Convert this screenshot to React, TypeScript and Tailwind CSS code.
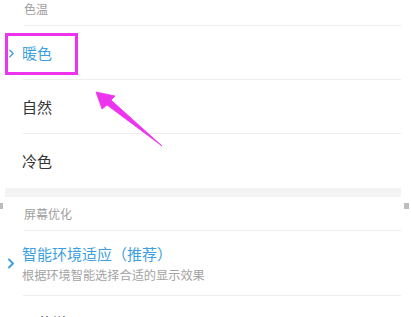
import React from "react";

const Chevron = ({ size = "sm" }: { size?: "sm" | "lg" }) => (
  <svg
    width={size === "sm" ? 7 : 8}
    height={size === "sm" ? 9 : 11}
    viewBox="0 0 8 11"
    className="shrink-0"
  >
    <polyline
      points="2,1.5 6,5.5 2,9.5"
      fill="none"
      stroke="#3d9fe0"
      strokeWidth={size === "sm" ? 1.7 : 1.9}
      strokeLinecap="round"
      strokeLinejoin="round"
    />
  </svg>
);

const SectionLabel = ({ text, h }: { text: string; h: string }) => (
  <div className="pl-[5px] pr-[10px]">
    <div className={`ml-[19px] ${h} flex items-center border-b border-[#eeeeee] text-[12px] text-[#a0a0a0]`}>
      {text}
    </div>
  </div>
);

const Option = ({
  title,
  sub,
  active,
  h,
  last,
}: {
  title: string;
  sub?: string;
  active?: boolean;
  h: string;
  last?: boolean;
}) => (
  <div className="flex pr-[10px]">
    <div className={`w-[23px] flex justify-start ${sub ? "pl-[7px]" : "pl-[8px]"} items-center`}>
      {active && <Chevron size={sub ? "lg" : "sm"} />}
    </div>
    <div className={`flex-1 ${h} flex flex-col justify-center ${last ? "" : "border-b border-[#eeeeee]"}`}>
      <div className={`-ml-[1px] text-[15px] leading-[20px] ${active ? "text-[#3d9fe0]" : "text-[#333333]"}`}>
        {title}
      </div>
      {sub && <div className="-ml-[1px] mt-[3px] text-[12.2px] leading-[16px] text-[#a3a3a3]">{sub}</div>}
    </div>
  </div>
);

export default function App() {
  return (
    <div
      className="relative w-[411px] h-[317px] overflow-hidden bg-white"
      style={{ fontFamily: '"Noto Sans CJK SC", "Noto Sans", sans-serif' }}
    >
      <div className="-mt-[8px]">
        <SectionLabel text="色温" h="h-[34px]" />
        <Option title="暖色" active h="h-[54px]" />
        <Option title="自然" h="h-[54px]" />
        <Option title="冷色" h="h-[54px]" last />
        <div className="pl-[5px] pr-[10px]">
          <div className="h-[9px] bg-[#f3f3f3]" />
        </div>
        <SectionLabel text="屏幕优化" h="h-[34px]" />
        <Option title="智能环境适应（推荐）" sub="根据环境智能选择合适的显示效果" active h="h-[65px]" />
        <Option title="屏幕增强" h="h-[54px]" />
      </div>

      {/* stray marks at the edges */}
      <div className="absolute left-0 top-[203px] w-[3px] h-[6px] bg-[#bdbdbd]" />
      <div className="absolute left-[404px] top-[203px] w-[5px] h-[6px] bg-[#bdbdbd]" />

      {/* annotation box */}
      <div className="absolute left-[5px] top-[33px] w-[73px] h-[42px] border-[3px] border-[#ee33ee]" />

      {/* annotation arrow */}
      <svg className="absolute left-0 top-0" width="411" height="317" viewBox="0 0 411 317">
        <polygon
          points="96,92 115,96 111,100 162,146 107,105 102,109"
          fill="#ee33ee"
          stroke="#ee33ee"
          strokeWidth="0.8"
          strokeLinejoin="round"
        />
      </svg>
    </div>
  );
}
